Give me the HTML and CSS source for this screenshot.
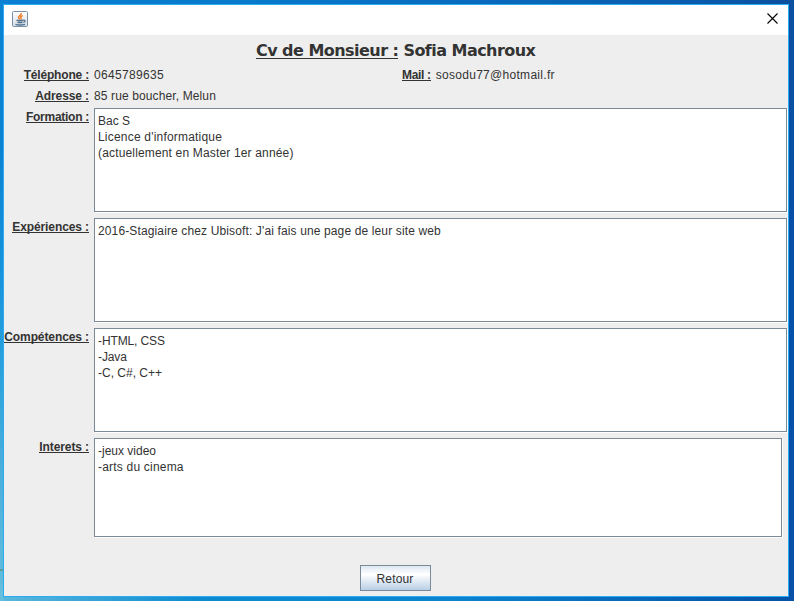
FILE: index.html
```
<!DOCTYPE html>
<html lang="fr">
<head>
<meta charset="utf-8">
<title>Cv</title>
<link rel="stylesheet" href="styles.css">
</head>
<body>
<div class="window">
  <header class="titlebar">
    <svg class="java" width="16" height="16" viewBox="0 0 16 16">
      <defs><linearGradient id="tile" x1="0" y1="0" x2="0" y2="1"><stop offset="0" stop-color="#fff"/><stop offset="1" stop-color="#d3dde6"/></linearGradient></defs>
      <rect x=".5" y=".5" width="15" height="15" rx="1" fill="url(#tile)" stroke="#7891a8"/>
      <path d="M9.3 2C9.8 4.2 6 5 6.5 6.6c.2.8 1 1 1.2 1.8M10.8 4.6C8.4 5.4 8.4 6.3 9 7.1c.3.5 0 1-.4 1.3" fill="none" stroke="#ee7d26" stroke-width="1.5"/>
      <path d="M4.5 9.5h6.5M5.5 11.5h5M11 9.2c3-.6 2.5 1.8.3 2.2M3.5 13.4c2 .8 7 .8 9.5-.1" fill="none" stroke="#50718e" stroke-width="1.3"/>
    </svg>
    <svg class="close" width="11" height="11" viewBox="0 0 11 11"><path d="M.5 .5l10 10M10.5 .5l-10 10" stroke="#000" stroke-width="1.1"/></svg>
  </header>
  <main class="content">
    <h1 class="title"><span class="title-label">Cv de Monsieur :</span> <span class="name">Sofia Machroux</span></h1>
    <div class="row">
      <div class="key"><span class="label phone">Téléphone :</span></div>
      <div class="contact"><span class="value number">0645789635</span></div>
      <span class="label mail">Mail :</span><span class="value address">sosodu77@hotmail.fr</span>
    </div>
    <div class="row">
      <div class="key"><span class="label adr">Adresse :</span></div>
      <span class="value street">85 rue boucher, Melun</span>
    </div>
    <div class="row block">
      <div class="key"><span class="label form">Formation :</span></div>
      <div class="area"><p>Bac S</p><p class="wide">Licence d'informatique</p><p class="medium">(actuellement en Master 1er année)</p></div>
    </div>
    <div class="row block">
      <div class="key"><span class="label">Expériences :</span></div>
      <div class="area"><p class="normal">2016-Stagiaire chez Ubisoft: J'ai fais une page de leur site web</p></div>
    </div>
    <div class="row block">
      <div class="key"><span class="label">Compétences :</span></div>
      <div class="area"><p class="tight">-HTML, CSS</p><p class="tight">-Java</p><p>-C, C#, C++</p></div>
    </div>
    <div class="row block last">
      <div class="key"><span class="label">Interets :</span></div>
      <div class="area"><p>-jeux video</p><p class="wide">-arts du cinema</p></div>
    </div>
    <div class="actions"><button class="button" type="button">Retour</button></div>
  </main>
</div>
</body>
</html>
```
FILE: styles.css
```
* { box-sizing: border-box; }
body {
  margin: 0;
  height: 601px;
  padding: 4px 5px 4px 3px;
  overflow: hidden;
  font: 12px/16px "Liberation Sans", Arial, sans-serif;
  color: #333;
  background:
    linear-gradient(#5f9e94, #5f9e94) 0 569px / 3px 2px no-repeat,
    linear-gradient(#0b83d2 0, #0b83d2 150px, #1792dc 270px, #2ba2dc 370px, #48addb 460px, #66bfdc 601px) 0 0 / 3px 601px no-repeat,
    linear-gradient(#0c50a0, #0250a8 300px, #0752a6) 100% 0 / 5px 601px no-repeat,
    linear-gradient(90deg, #0b80d2, #0879cb 250px, #0b5bac 700px, #0c4f9d) 0 0 / 100% 4px no-repeat,
    linear-gradient(90deg, #5ab8dc, #0c8bd0 200px, #0b83d0 450px, #0552a8 794px);
}
.window { height: 593px; border: 1px solid #2caaf2; background: #eee; }
.titlebar { display: flex; justify-content: space-between; height: 30px; padding: 6px 10px 0 8px; background: #fff; }
.close { margin-top: 2px; }
.content { display: flex; flex-direction: column; height: 561px; }
.title {
  display: flex;
  gap: 5px;
  height: 29px;
  margin: 0;
  padding: 5px 0 0 252px;
  font: bold 16px/22px "DejaVu Sans", sans-serif;
  letter-spacing: -.54px;
  white-space: nowrap;
}
.title-label { height: 19px; border-bottom: 1px solid #333; }
.row { display: flex; height: 21px; padding-top: 4px; line-height: 14px; }
.key { flex: 0 0 85px; display: flex; justify-content: flex-end; }
.label { height: 13px; border-bottom: 1px solid #333; font-weight: bold; letter-spacing: -.1px; white-space: nowrap; }
.phone { letter-spacing: -.18px; }
.form { letter-spacing: -.27px; }
.mail { letter-spacing: -.33px; }
.value { margin-left: 5px; white-space: nowrap; }
.number { letter-spacing: .33px; }
.address { letter-spacing: .29px; }
.street { letter-spacing: .12px; }
.contact { flex: 0 0 313px; }
.block { height: 110px; padding: 2px 0 0; line-height: 16px; }
.block .label { margin-top: 2px; line-height: 14px; }
.area { flex: 0 0 693px; height: 104px; margin-left: 5px; padding: 4px 3px; border: 1px solid #7a8a99; background: #fff; box-shadow: 1px 1px #fff; }
.last .area { flex-basis: 688px; height: 99px; }
p { margin: 0; white-space: nowrap; }
.wide { letter-spacing: .2px; }
.medium { letter-spacing: .16px; }
.normal { letter-spacing: .13px; }
.tight { letter-spacing: -.12px; }
.actions { display: flex; justify-content: center; margin: 19px 2px 0 0; }
.button { width: 71px; height: 26px; padding: 1px 0 0; border: 1px solid #7a8a99; border-radius: 0; background: linear-gradient(#dde8f3, #fff 35%, #b8cfe5); color: #333; font: 12px "Liberation Sans", Arial, sans-serif; letter-spacing: .15px; }
```
